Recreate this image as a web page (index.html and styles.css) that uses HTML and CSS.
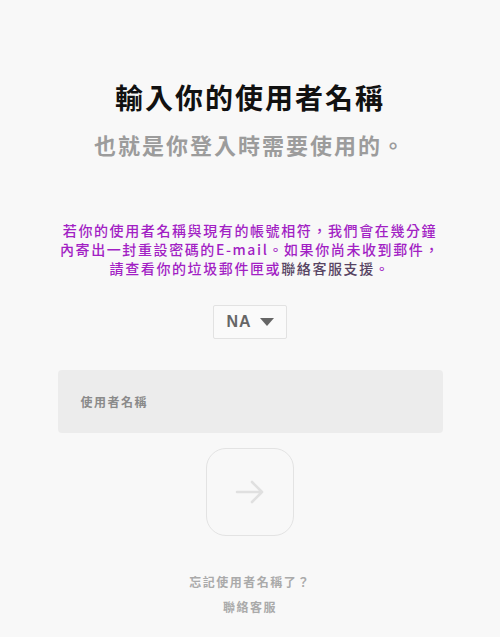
FILE: index.html
```html
<!DOCTYPE html>
<html lang="zh-Hant">
<head>
<meta charset="utf-8">
<title>輸入你的使用者名稱</title>
<link rel="stylesheet" href="styles.css">
</head>
<body>
<main class="page">
  <h1 class="title">輸入你的使用者名稱</h1>
  <p class="subtitle">也就是你登入時需要使用的。</p>
  <p class="info">若你的使用者名稱與現有的帳號相符，我們會在幾分鐘<br>內寄出一封重設密碼的E-mail。如果你尚未收到郵件，<br>請查看你的垃圾郵件匣或<a class="support" href="#">聯絡客服支援</a>。</p>
  <div class="select">NA <span class="caret"></span></div>
  <div class="field"><span class="placeholder">使用者名稱</span></div>
  <button class="go" type="button" aria-label="下一步">
    <svg width="34" height="34" viewBox="0 0 34 34" fill="none" stroke="#e0e0e0" stroke-width="2.6" stroke-linecap="round" stroke-linejoin="round"><path d="M4 17h25M19 7l10 10-10 10"/></svg>
  </button>
  <a class="link first" href="#">忘記使用者名稱了？</a>
  <a class="link" href="#">聯絡客服</a>
</main>
</body>
</html>
```
FILE: styles.css
```css
html, body {
  margin: 0;
  padding: 0;
  background: #f8f8f8;
}
body {
  font-family: "Noto Sans CJK TC", "Noto Sans", sans-serif;
  width: 500px;
  height: 637px;
  overflow: hidden;
}
.page {
  display: flex;
  flex-direction: column;
  align-items: center;
  padding-top: 77px;
}
.title {
  margin: 0;
  font-size: 28px;
  line-height: 40px;
  font-weight: 700;
  color: #111;
  letter-spacing: 2px;
}
.subtitle {
  margin: 11px 0 0;
  font-size: 22px;
  line-height: 32px;
  font-weight: 700;
  color: #9c9c9c;
  letter-spacing: 2px;
}
.info {
  margin: 61px 0 0;
  text-align: center;
  font-size: 14px;
  line-height: 19px;
  font-weight: 500;
  color: #a21fc4;
  letter-spacing: 1.6px;
}
.support {
  color: #574463;
  text-decoration: none;
}
.select {
  margin-top: 27px;
  width: 72px;
  height: 32px;
  box-sizing: content-box;
  border: 1px solid #e2e2e2;
  border-radius: 2px;
  background: #fafafa;
  display: flex;
  align-items: center;
  justify-content: center;
  gap: 8px;
  font-family: "Liberation Sans", Arial, sans-serif;
  font-size: 16px;
  font-weight: 700;
  color: #666;
  letter-spacing: 1px;
}
.caret {
  width: 0;
  height: 0;
  border-left: 7px solid transparent;
  border-right: 7px solid transparent;
  border-top: 8px solid #666;
}
.field {
  margin-top: 31px;
  width: 385px;
  height: 63px;
  background: #ececec;
  border-radius: 4px;
  display: flex;
  align-items: center;
  padding-left: 23px;
  box-sizing: border-box;
}
.placeholder {
  font-size: 12px;
  font-weight: 700;
  color: #8a8a8a;
  letter-spacing: 1.5px;
}
.go {
  margin-top: 15px;
  width: 88px;
  height: 88px;
  border: 1px solid #e3e3e3;
  border-radius: 20px;
  background: #f8f8f8;
  display: flex;
  align-items: center;
  justify-content: center;
  padding: 0;
}
.link {
  font-size: 12px;
  line-height: 25px;
  font-weight: 700;
  color: #aaa;
  letter-spacing: 1.5px;
  text-decoration: none;
}
.link.first {
  margin-top: 33px;
}
```
